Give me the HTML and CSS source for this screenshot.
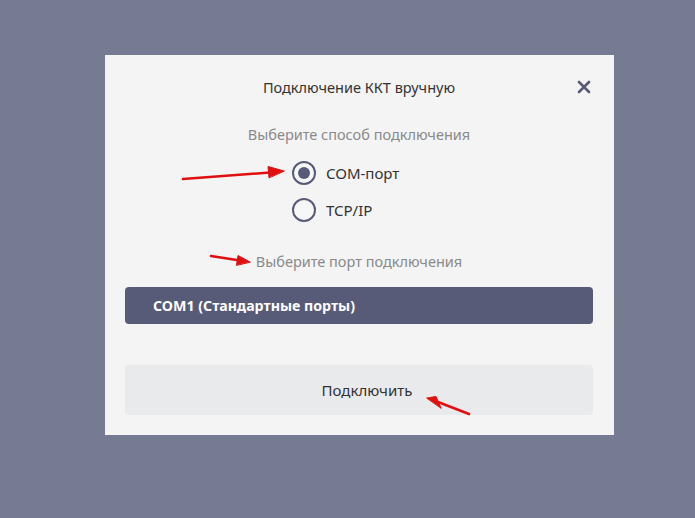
FILE: index.html
```html
<!DOCTYPE html>
<html lang="ru">
<head>
<meta charset="utf-8">
<link rel="stylesheet" href="styles.css">
</head>
<body>
<div class="dialog">
  <div class="header">
    <span class="title">Подключение ККТ вручную</span>
    <svg class="close" width="14" height="14" viewBox="0 0 14 14"><path d="M2 2L12 12M12 2L2 12" stroke="#585b78" stroke-width="2.6" stroke-linecap="round"/></svg>
  </div>
  <div class="label">Выберите способ подключения</div>
  <div class="radios">
    <div class="radio-row"><span class="radio checked"></span><span class="radio-text">COM-порт</span></div>
    <div class="radio-row"><span class="radio"></span><span class="radio-text">TCP/IP</span></div>
  </div>
  <div class="label label2">Выберите порт подключения</div>
  <div class="select">COM1 (Стандартные порты)</div>
  <div class="button">Подключить</div>
</div>
<svg class="arrows" width="695" height="518" viewBox="0 0 695 518">
  <g stroke="#e01010" stroke-width="2.6" fill="#e01010" stroke-linecap="round">
    <line x1="183" y1="179" x2="270" y2="172.5"/>
    <polygon points="284,171 268,166.5 269,177.5" stroke-width="1"/>
    <line x1="211" y1="256" x2="240" y2="260.5"/>
    <polygon points="250,262 238,255.5 236.5,265" stroke-width="1"/>
    <line x1="469" y1="414" x2="438" y2="402"/>
    <polygon points="427,398 436,396.5 441,408" stroke-width="1"/>
  </g>
</svg>
</body>
</html>
```
FILE: styles.css
```css
html, body {
  margin: 0;
  padding: 0;
}
body {
  background: #767a92;
  width: 695px;
  height: 518px;
  position: relative;
  font-family: "Noto Sans", "Open Sans", sans-serif;
  padding: 55px 0 0 105px;
  box-sizing: border-box;
}
.dialog {
  width: 509px;
  height: 380px;
  background: #f4f4f4;
  box-sizing: border-box;
  padding: 0 21px 20px 20px;
  display: flex;
  flex-direction: column;
}
.header {
  height: 64px;
  display: flex;
  align-items: center;
  justify-content: center;
  position: relative;
}
.title {
  font-size: 14.5px;
  color: #333;
}
.close {
  position: absolute;
  right: 2px;
  top: 25px;
}
.label {
  text-align: center;
  font-size: 14.5px;
  color: #8a8a8a;
  line-height: 20px;
  margin-top: 5px;
}
.radios {
  display: flex;
  flex-direction: column;
  align-items: center;
  gap: 13px;
  margin-top: 17px;
  padding-right: 22px;
}
.radio-row {
  display: flex;
  align-items: center;
  gap: 10px;
  width: 112px;
}
.radio {
  width: 24px;
  height: 24px;
  border: 2px solid #585b78;
  border-radius: 50%;
  box-sizing: border-box;
  display: flex;
  align-items: center;
  justify-content: center;
  background: #f7f7f7;
}
.radio.checked::after {
  content: "";
  width: 12px;
  height: 12px;
  border-radius: 50%;
  background: #585b78;
}
.radio-text {
  font-size: 15px;
  color: #333;
}
.label2 {
  margin-top: 29px;
}
.select {
  margin-top: 16px;
  height: 37px;
  background: #585b78;
  border-radius: 4px;
  color: #fff;
  font-weight: bold;
  font-size: 14.2px;
  display: flex;
  align-items: center;
  padding-left: 28px;
}
.button {
  margin-top: 41px;
  height: 50px;
  background: #e9eaec;
  border-radius: 4px;
  color: #333;
  font-size: 15px;
  display: flex;
  align-items: center;
  justify-content: center;
  padding-left: 16px;
}
.arrows {
  position: absolute;
  left: 0;
  top: 0;
  pointer-events: none;
}
```
